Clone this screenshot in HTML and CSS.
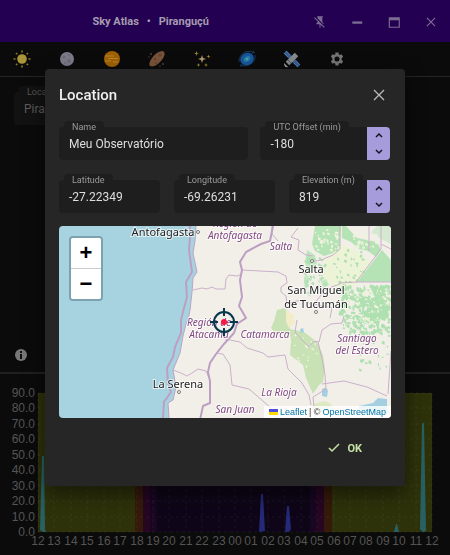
FILE: index.html
```html
<!DOCTYPE html>
<html lang="en">
<head>
<meta charset="utf-8">
<meta name="viewport" content="width=device-width, initial-scale=1">
<title>Sky Atlas • Piranguçú</title>
<link rel="stylesheet" href="styles.css">
</head>
<body>
<div class="app">
  <header class="titlebar">
    <h1 class="app-title"><span>Sky Atlas</span><span>•</span><span>Piranguçú</span></h1>
    <div class="window-actions">
      <button aria-label="Unpin"><svg width="14" height="14" viewBox="0 0 24 24"><path d="M2 5.3 3.3 4 20 20.700 18.700 22l-5.900-5.900V22h-1.600v-6H6v-2l2-2v-.700zM16 12l2 2v2h-.200L8 6.200V4H7V2h10v2h-1z"/></svg></button>
      <button aria-label="Minimize"><svg width="14" height="14" viewBox="0 0 24 24"><path d="M4 11h17v4H4z"/></svg></button>
      <button aria-label="Maximize"><svg width="14" height="14" viewBox="0 0 24 24"><path d="M3 4h19v18H3zm2 5v11h15V9z" fill-rule="evenodd"/></svg></button>
      <button aria-label="Close window"><svg width="14" height="14" viewBox="0 0 24 24"><path d="M5 5l14 14M19 5 5 19" fill="none" stroke="currentColor" stroke-width="2"/></svg></button>
    </div>
  </header>
  <nav class="tabs">
    <button aria-label="Sun"><svg width="18" height="18" viewBox="0 0 18 18"><circle cx="9" cy="9" r="4.800" fill="#aa953b"/><g fill="none" stroke="#8f7828" stroke-width="1.600"><path d="M9 .500v2M9 15.500v2M.500 9h2M15.500 9h2M3 3l1.300 1.300M13.700 13.700 15 15M3 15l1.300-1.300M13.700 4.300 15 3"/></g></svg></button>
    <button aria-label="Moon"><svg width="18" height="18" viewBox="0 0 18 18"><circle cx="9" cy="9" r="7" fill="#7c7a88"/><g fill="#6b6978"><circle cx="6" cy="7" r="1.500"/><circle cx="11" cy="5" r="1"/><circle cx="11" cy="11" r="2"/><circle cx="7" cy="13" r="1"/></g></svg></button>
    <button aria-label="Planets"><svg width="18" height="18" viewBox="0 0 18 18"><circle cx="9" cy="9" r="8" fill="#a06000"/><path d="M2 6h9M5 8.500h10M2 11h6M10 12h5" stroke="#b78335" stroke-width="1"/></svg></button>
    <button aria-label="Asteroids"><svg width="18" height="18" viewBox="0 0 18 18"><path d="M2 16Q0 13 4 8 9 1 15 1q4 3-2 10-6 7-11 5" fill="#79523b"/><g fill="#65422f"><circle cx="7" cy="9" r="1.300"/><circle cx="12" cy="5" r="1.500"/><circle cx="8" cy="13" r="1"/></g><g fill="#5d3f2e"><circle cx="3" cy="4" r="1"/><circle cx="15" cy="14" r="1"/><circle cx="1" cy="7" r=".700"/><circle cx="12" cy="16" r=".700"/></g></svg></button>
    <button aria-label="Stars"><svg width="18" height="18" viewBox="0 0 18 18"><path d="m9 5 1 3 3 1-3 1-1 3-1-3-3-1 3-1z" fill="#b2996a"/><path d="m3.500 1 .600 1.900 1.900.600-1.900.600-.600 1.900-.600-1.900L1 3.500l1.900-.600zM15.500 4.500l.500 1.500 1.500.500-1.500.500-.500 1.500-.500-1.500-1.500-.500 1.500-.500zM5.500 13l.500 1.500 1.500.500-1.500.500-.500 1.500-.500-1.500-1.500-.500 1.500-.500zM13 13l.500 1.500 1.500.500-1.500.500-.500 1.500-.500-1.500-1.500-.500 1.500-.500z" fill="#a08a28"/></svg></button>
    <button aria-label="Galaxies"><svg width="18" height="18" viewBox="0 0 18 18"><g fill="none" stroke="#163a5c" stroke-width="1"><path d="M1 12Q1 5 7 2q6-2 10 1M17 5q1 7-6 10-5 2-9 0M3 17q0-2 1-3M16 1l-2 3"/></g><ellipse cx="9" cy="9" rx="7" ry="6" transform="rotate(-30 9 9)" fill="#19559b"/><ellipse cx="9" cy="9" rx="3.500" ry="2.500" transform="rotate(-30 9 9)" fill="#277fa5"/><circle cx="9" cy="9" r="1" fill="#5fa997"/></svg></button>
    <button aria-label="Satellites"><svg width="18" height="18" viewBox="0 0 18 18"><path d="m2 2 14 14" stroke="#385f91" stroke-width="4"/><path d="m3 1 4 4M1 3l4 4M11 13l4 4M13 11l4 4" stroke="#5d83aa" stroke-width=".700"/><path d="m4.500 13.500 9-9" stroke="#85898c" stroke-width="5"/><path d="m1 13 4 4q-4 1-4-4" fill="#a0a2a2"/><path d="m5 10 3 3" stroke="#55595c"/></svg></button>
    <button aria-label="Settings"><svg width="14" height="14" viewBox="0 0 24 24"><path fill="#747474" fill-rule="evenodd" d="m9.500 1-.500 3-2 1.200L4 4 1.500 8.300 4 10.500v3l-2.500 2.200L4 20l3-1.200L9 20l.500 3h5l.500-3 2-1.200 3 1.200 2.500-4.300-2.500-2.200v-3l2.500-2.200L20 4l-3 1.200L15 4l-.500-3zM12 7.700a4.300 4.300 0 1 0 0 8.600 4.300 4.300 0 0 0 0-8.600"/></svg></button>
  </nav>
  <section class="page">
    <div class="field place">
      <label for="place">Location</label>
      <input id="place" value="Piranguçú">
    </div>
    <button class="info" aria-label="Information"><svg width="14" height="14" viewBox="0 0 14 14"><circle cx="7" cy="7" r="6" fill="#777"/><path d="M6 3h2v2H6zM6 6h2v5H6z" fill="#101010"/></svg></button>
  </section>
  <section class="chart">
    <svg viewBox="0 0 450 181" role="img" aria-label="Altitude chart">
      <path fill="#2e320a" d="M38 19h97v139H38zM332 19h100v139H332z"/>
      <path fill="#351a0a" d="M135 19h8v139h-8zM324 19h8v139h-8z"/>
      <path fill="#270622" d="M143 19h7v139h-7zM317 19h7v139h-7z"/>
      <path fill="#180622" d="M150 19h7v139h-7zM310 19h7v139h-7z"/>
      <path fill="#0e0618" d="M157 19h153v139H157z"/>
      <g class="grid" id="grid"></g>
      <path fill="#286064" d="m40 156 2-74h2l1 74 1 2h-3zM394 158l2-8h1l2 8zM420 155l2-105q1-3 2 0l2 107-3 1z"/>
      <path fill="#252a78" d="m259 158 2-38h2l2 37zM285 158l2-26h2l2 23-2 3z"/>
      <g class="axis" id="axis-y" text-anchor="end"></g>
      <g class="axis" id="axis-x" text-anchor="middle"></g>
    </svg>
  </section>
</div>

<div class="overlay">
  <form class="dialog" role="dialog" aria-labelledby="dialog-title">
    <div class="dialog-header">
      <h2 id="dialog-title">Location</h2>
      <button type="button" class="close" aria-label="Close"><svg width="12" height="12" viewBox="0 0 12 12"><path d="m1 1 10 10M11 1 1 11" fill="none" stroke="currentColor" stroke-width="1.300"/></svg></button>
    </div>
    <div class="row row-main">
      <div class="field wide"><label for="name">Name</label><input id="name" value="Meu Observatório"></div>
      <div class="field number"><label for="utc">UTC Offset (min)</label><input id="utc" value="-180">
        <div class="spin"><button type="button" aria-label="Increase offset"><svg width="10" height="6" viewBox="0 0 10 6"><path d="m2 5 3-3 3 3"/></svg></button><button type="button" aria-label="Decrease offset"><svg width="10" height="6" viewBox="0 0 10 6"><path d="m2 1 3 3 3-3"/></svg></button></div>
      </div>
    </div>
    <div class="row row-coords">
      <div class="field"><label for="lat">Latitude</label><input id="lat" value="-27.22349"></div>
      <div class="field"><label for="lon">Longitude</label><input id="lon" value="-69.26231"></div>
      <div class="field number"><label for="elev">Elevation (m)</label><input id="elev" value="819">
        <div class="spin"><button type="button" aria-label="Increase elevation"><svg width="10" height="6" viewBox="0 0 10 6"><path d="m2 5 3-3 3 3"/></svg></button><button type="button" aria-label="Decrease elevation"><svg width="10" height="6" viewBox="0 0 10 6"><path d="m2 1 3 3 3-3"/></svg></button></div>
      </div>
    </div>
    <div class="map">
      <svg class="map-art" viewBox="0 0 332 192" preserveAspectRatio="xMidYMid slice" role="img" aria-label="Map">
        <path fill="#a6d3df" d="M0 0h332v192H0z"/>
        <path fill="#f2efe9" d="M137 0l-1 15-2 12 4 19-4 6-1 14-2 18-2 10-2 4-3 12-3 17-7 17 3 17-3 13-5 3 1 15h222V0z"/>
        <path fill="#edf3d7" d="M281 18l17 7 15 11-15 23-18 4-16-8 2-20z"/>
        <path fill="#b5e3b5" d="M256 0h26l-1 20-7 7-9 3-9-5-3-7zM283 0h4l11 12 20 4 4 8-5 7-8-6-9-2-8-7-9-4zM323 24l9 10v22h-34z"/>
        <path fill="#b5e3b5" d="M318 0h14v18l-8-4-12-8z" opacity=".5"/>
        <path fill="#c8e2b5" d="M218 84l7-2 5 4 1 17 14 3 13 10 6 13 2 14-2 13-4 3-6 9-7-16-3-13-13-10 1-15-1-6-15-1-4-5 3-7z"/>
        <path fill="#f2ecc9" d="M227 84l8 5 1 8-6 5-3-6z"/>
        <path fill="#b5e3b5" d="M248 24l8 5 2 9-7 9-5-3 4 10-4 13 7-3-2 7-5-6-1-13 3-7-2-9zM262 55l5-2 3 6-6 3z" opacity=".8"/>
        <g id="woods" fill="#aee0b0"></g>
        <g id="clearings" fill="#f0f3dc"></g>
        <path fill="#a4cfe0" d="M263 163q5-3 6 2l-1 6-5-1zM300 180l14-3 5-5 9 1v14h-28zM241 103l3-1 1 4-3 1zM152 108h3v3h-3z"/>
        <path fill="#dce9c3" d="M254 178l12-3 6 3 3 8h-22z"/>
        <g class="regions">
          <path d="M134 64l9-2 5 1 5-2 4 2h9l1-10 3-4 8 1 5-2M114 144l8 3 6 3 5-3 6-4 8 2 3 7M183 44l36 2 8 4 1 7-6 4v5l5 4 1 8 9-3 9-1 8 6M213 0v8l6 7M239 2l-7 9 8 3-1 10 8 5 7 1M281 0v23l-7 6-12 5-11 2M310 0v25M322 0v23l-25 33h35M297 56l-17 1M281 58l-14 5-12 15 18 4-2 10M322 18l10 5"/>
          <path d="M166 113l15 3 7 6 16 5 5 4 17-2 3 14 14 14 7 12 2 10M157 127l7 1 7 11 2 20 17 4 22 19 5 10M238 94l-2 12 8 9 6 6 5-6 5 1 3-12 9-6 11-1 2-7M259 116l4 17 3 16 1 14-13 8 2 21M263 158l22-3 23 6 20 9M329 168l3-43"/>
        </g>
        <path class="coast" d="M137 0l-1 15-2 12 4 19-4 6-1 14-2 18-2 10-2 4-3 12-3 17-7 17 3 17-3 13-5 3 1 15"/>
        <path class="frontier" d="M131 0v11l-1 13 3 22-6 10 1 15-3 11-3 12v13l-6 14-2 10-6 11 1 15 3 9-7 10-1 16"/>
        <path class="frontier" d="M214 0l-3 15-9 3-15 8-6 10 2 8-2 10 2 17-3 9 7 12-9 6-3 9-10 11-8 10-6 9-2 9 2 9v22l-7 3-3 14"/>
        <g class="city"><text x="104" y="10" text-anchor="middle">Antofagasta</text><text x="252" y="47" text-anchor="middle">Salta</text><text x="257" y="68" text-anchor="middle">San Miguel</text><text x="257" y="82" text-anchor="middle">de Tucumán</text><text x="119" y="162" text-anchor="middle">La Serena</text></g>
        <g class="province"><text x="176" y="1" text-anchor="middle">Región de</text><text x="176" y="13" text-anchor="middle">Antofagasta</text><text x="222" y="24" text-anchor="middle">Salta</text><text x="150" y="100" text-anchor="middle">Región de</text><text x="150" y="112" text-anchor="middle">Atacama</text><text x="206" y="112" text-anchor="middle">Catamarca</text><text x="298" y="116" text-anchor="middle">Santiago</text><text x="298" y="128" text-anchor="middle">del Estero</text><text x="220" y="170" text-anchor="middle">La Rioja</text><text x="176" y="187" text-anchor="middle">San Juan</text></g>
        <g fill="#fff" stroke="#777" stroke-width="1"><circle cx="139" cy="6" r="1.500"/><circle cx="253" cy="35" r="1.500"/><circle cx="257" cy="86" r="1.500"/><circle cx="120" cy="166" r="1.500"/></g>
        <g fill="none" stroke="#07384d" stroke-width="2"><circle cx="165" cy="96" r="10"/><path d="M165 82v8M165 102v8M151 96h8M171 96h8"/></g><circle cx="165" cy="96" r="3" fill="#fc1644"/>
      </svg>
      <div class="zoom"><button type="button" aria-label="Zoom in">+</button><button type="button" aria-label="Zoom out">−</button></div>
      <div class="credit"><svg width="9" height="6" viewBox="0 0 9 6"><path fill="#4c4ee0" d="M0 0h9v3H0z"/><path fill="#ffd900" d="M0 3h9v3H0z"/></svg> <a href="#">Leaflet</a> | © <a href="#">OpenStreetMap</a></div>
    </div>
    <div class="dialog-footer"><button class="ok"><svg width="12" height="12" viewBox="0 0 12 12"><path d="m1 6 3 3 7-7" fill="none" stroke="currentColor" stroke-width="1.500"/></svg>OK</button></div>
  </form>
</div>
<script src="chart.js"></script>
</body>
</html>
```
FILE: chart.js
```js
const ns = "http://www.w3.org/2000/svg";
const plot = { left: 38, right: 432, top: 19, bottom: 158 };

function add(parent, tag, attrs, text) {
  const node = document.createElementNS(ns, tag);
  for (const key in attrs) node.setAttribute(key, attrs[key]);
  if (text) node.textContent = text;
  document.getElementById(parent).append(node);
}

for (let i = 0; i <= 9; i++) {
  const y = Math.round(plot.bottom - i * (plot.bottom - plot.top) / 9);
  add("grid", "path", { d: `M${plot.left} ${y}H${plot.right}` });
  add("axis-y", "text", { x: 35, y: y + 4 }, (i * 10).toFixed(1));
}
for (let i = 0; i <= 24; i++) {
  const x = Math.round(plot.left + i * (plot.right - plot.left) / 24);
  add("grid", "path", { d: `M${x} ${plot.top}V${plot.bottom}` });
  add("axis-x", "text", { x, y: 171 }, String((i + 12) % 24).padStart(2, "0"));
}

// Patchwork of woodland and clearings on the map's eastern plain.
let seed = 7;
function random() {
  seed = (seed * 16807) % 2147483647;
  return seed / 2147483647;
}
function scatter(layer, count, left, top, width, height, size) {
  let d = "";
  for (let i = 0; i < count; i++) {
    const x = left + random() * width;
    const y = top + random() * height;
    const w = 1 + random() * size;
    const h = 1 + random() * size;
    d += `M${x.toFixed(1)} ${y.toFixed(1)}l${w.toFixed(1)} ${(h / 3).toFixed(1)} ${(-w / 4).toFixed(1)} ${h.toFixed(1)} ${(-w).toFixed(1)} ${(-h / 2).toFixed(1)}z`;
  }
  add(layer, "path", { d });
}
scatter("woods", 230, 280, 58, 50, 32, 4);
scatter("woods", 90, 284, 88, 46, 18, 3);
scatter("woods", 25, 300, 104, 30, 40, 2);
scatter("woods", 50, 244, 26, 22, 36, 2);
scatter("woods", 30, 272, 20, 36, 36, 2);
scatter("clearings", 30, 256, 2, 24, 22, 2);
scatter("clearings", 25, 290, 4, 28, 20, 2);
scatter("clearings", 60, 284, 62, 46, 34, 2);
scatter("clearings", 25, 234, 108, 24, 40, 1);
```
FILE: styles.css
```css
* { box-sizing: border-box; }
body { margin: 0; background: #0b0b0b; color: #ddd; font-family: Roboto, "Liberation Sans", sans-serif; }
button { border: 0; padding: 0; background: none; color: inherit; font: inherit; display: flex; align-items: center; justify-content: center; }
h1, h2 { margin: 0; }
.app { min-height: 100vh; display: flex; flex-direction: column; }
.titlebar { height: 42px; background: #240052; color: #7b6c92; display: flex; justify-content: flex-end; align-items: center; padding-right: 12px; gap: 104px; }
.app-title { display: flex; gap: 8px; padding-top: 2px; font-size: 11px; line-height: 16px; font-weight: 700; color: #a59cb0; }
.window-actions { display: flex; gap: 23px; padding-top: 2px; }
.window-actions svg { fill: currentColor; }
.tabs { height: 35px; border-bottom: 1px solid #242424; padding: 0 13px; display: flex; align-items: center; gap: 27px; }
.tabs button { width: 18px; height: 18px; }
.page { flex: 1; padding: 15px 14px 10px; display: flex; flex-direction: column; justify-content: space-between; align-items: flex-start; border-bottom: 2px solid #202020; }
.chart svg { display: block; width: 100%; }
.grid { fill: none; stroke: #fff; stroke-opacity: .06; stroke-dasharray: 3 3; }
.axis { fill: #555; font: 12px "Liberation Sans", sans-serif; }

.field { position: relative; height: 33px; border-radius: 4px; background: #1e1e1e; display: flex; min-width: 0; flex: 1; }
.field label { position: absolute; top: -6px; left: 5px; padding: 0 8px; border-radius: 4px 4px 0 0; background: #1e1e1e; color: #9b9b9b; font-size: 9px; line-height: 12px; white-space: nowrap; }
.field input { width: 100%; min-width: 0; border: 0; outline: 0; padding: 0 10px; background: none; color: #dedede; font: 12px Roboto, sans-serif; }
.place { width: 180px; flex: none; background: #121212; }
.place label { background: #121212; color: #555; }
.place input { color: #5c5c5c; }

.overlay { position: fixed; inset: 0; display: flex; align-items: center; justify-content: center; }
.dialog { width: 80vw; padding: 0 14px; border-radius: 4px; background: #262626; box-shadow: 0 8px 20px rgba(0, 0, 0, .5); }
.dialog-header { height: 52px; display: flex; align-items: center; justify-content: space-between; }
.dialog-header h2 { font-size: 15px; line-height: 20px; font-weight: 500; color: #eee; }
.close { width: 24px; height: 24px; color: #bbb; }
.row { display: flex; margin-bottom: 13px; padding-right: 1px; }
.row-main { gap: 12px; padding-top: 6px; margin-bottom: 20px; }
.row-main .wide { flex: 19; }
.row-main .number { flex: 13; }
.row-coords { gap: 14px; }
.spin { flex: 0 0 23px; display: flex; flex-direction: column; border-radius: 0 4px 4px 0; background: #a79cdb; }
.spin button { flex: 1; }
.spin path { fill: none; stroke: #171421; stroke-width: 1.500; }
.map { position: relative; height: 192px; overflow: hidden; border-radius: 4px; }
.map-art { display: block; width: 100%; height: 100%; }
.regions { fill: none; stroke: #cbb0ca; stroke-width: 1; }
.coast { fill: none; stroke: #b9a4c5; stroke-width: 1; }
.frontier { fill: none; stroke: #bd9fc2; stroke-width: 2; }
.city { font: 11px "Noto Sans", sans-serif; fill: #222; }
.province { font: italic 10px "Noto Sans", sans-serif; fill: #804880; }
.city text, .province text { stroke: #fff; stroke-opacity: .7; stroke-width: 2; paint-order: stroke; }
.zoom { position: absolute; top: 10px; left: 10px; border: 2px solid rgba(60, 90, 100, .4); background-clip: padding-box; border-radius: 4px; overflow: hidden; }
.zoom button { width: 30px; height: 30px; background: #fff; color: #000; font: bold 22px "Liberation Sans", sans-serif; }
.zoom button + button { height: 31px; border-top: 1px solid #ccc; }
.credit { position: absolute; right: 0; bottom: 0; display: flex; align-items: center; gap: 2px; padding: 0 5px; background: rgba(255, 255, 255, .8); color: #333; font: 9px/12px "Liberation Sans", sans-serif; }
.credit a { color: #0078a8; text-decoration: none; }
.dialog-footer { height: 68px; padding: 0 29px 8px; display: flex; align-items: center; justify-content: flex-end; }
.ok { gap: 7px; color: #c5e1a5; font-size: 11px; font-weight: 700; }
```
